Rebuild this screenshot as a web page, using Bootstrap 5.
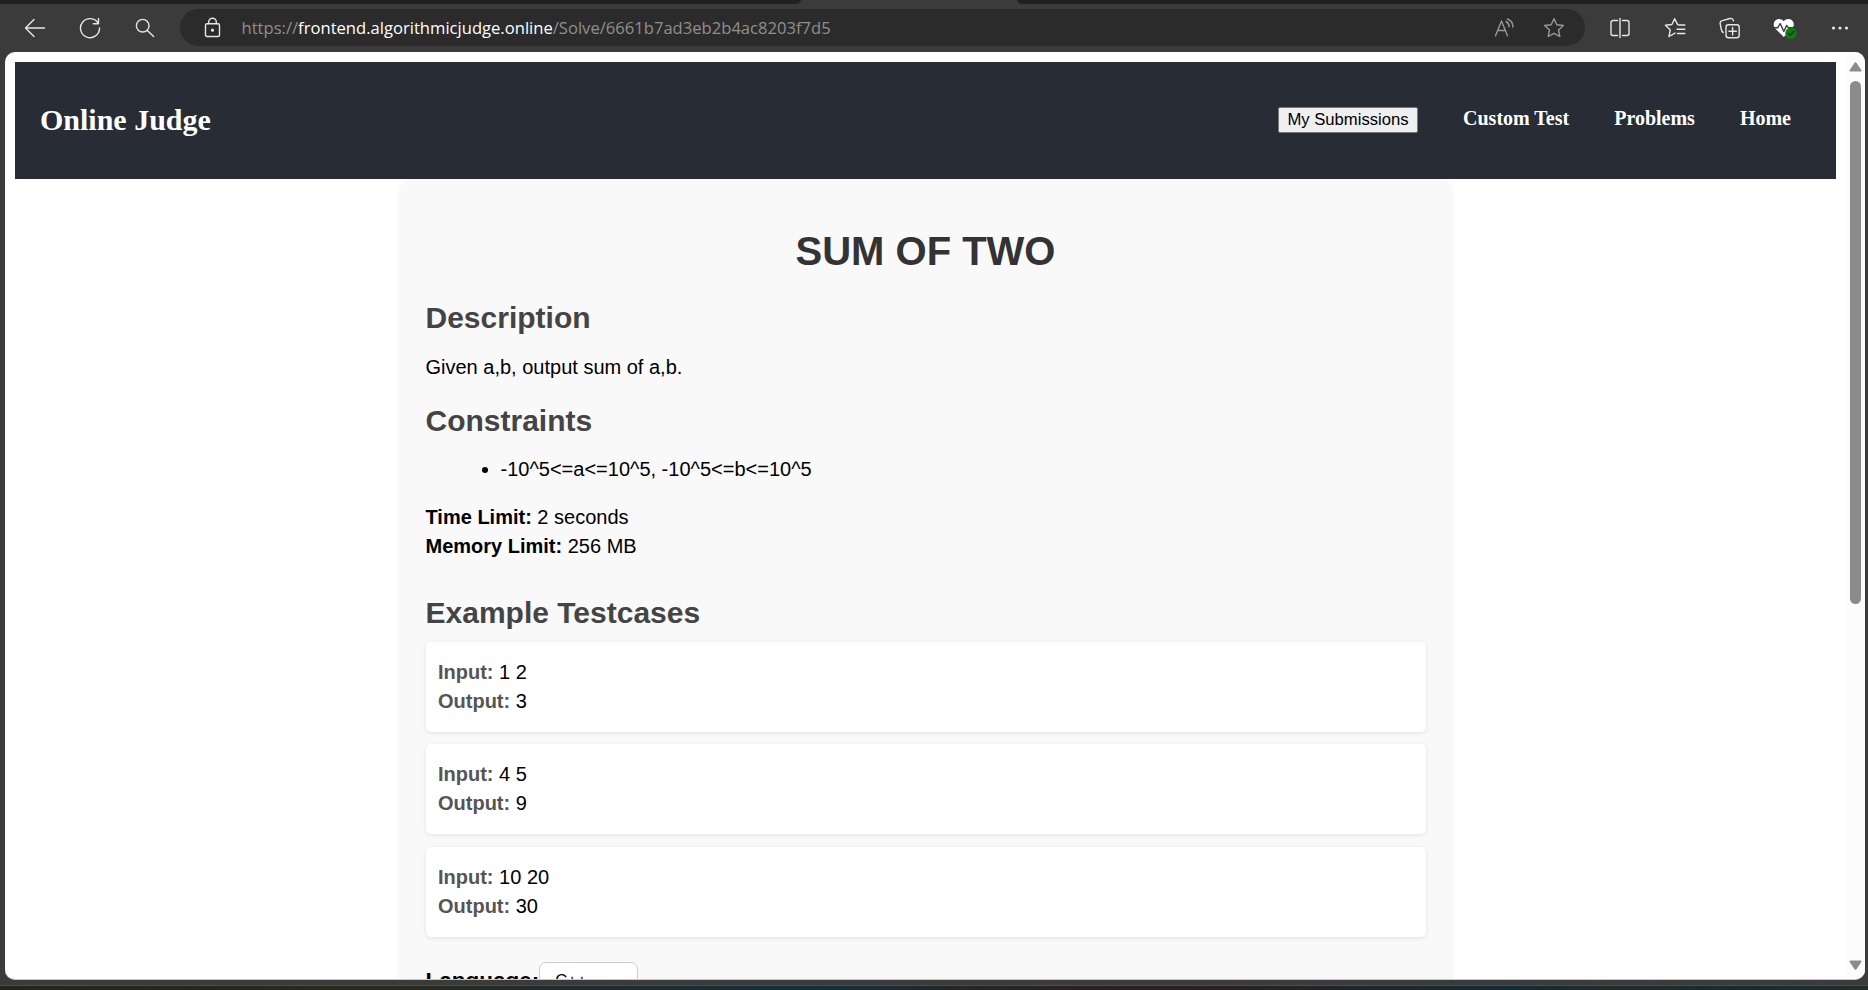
<!DOCTYPE html>
<html lang="en">
<head>
<meta charset="utf-8">
<title>Online Judge</title>
<link href="https://cdn.jsdelivr.net/npm/bootstrap@5.3.0/dist/css/bootstrap.min.css" rel="stylesheet">
<style>
body { height: 990px; overflow: hidden; background: #3b3b3b; color: #000; font-family: "Liberation Sans", Arial, sans-serif; font-size: 20px; line-height: 29.3px; }
.tab-strip { height: 4px; }
.tab-rest { background: #202020; }
.tab-left { width: 801px; border-bottom-right-radius: 6px 4px; }
.tab-right { width: 851px; border-bottom-left-radius: 6px 4px; }
.toolbar { height: 48px; padding: 0 1px 0 7.5px; color: #e6e6e6; }
.slot { width: 55px; height: 37px; }
.toolbar svg { display: block; fill: none; stroke: currentColor; stroke-width: 1.4; stroke-linecap: round; stroke-linejoin: round; }
.address { height: 37px; margin: 0 7px 1px 7.5px; background: #2b2b2b; padding: 0 6px 0 24px; }
.address .slot { width: 49.5px; color: #989898; }
.url { margin-left: 20.5px; font-family: "Open Sans", sans-serif; font-size: 16.6px; color: #8f8f8f; white-space: nowrap; line-height: 24px; }
.viewport { height: 928px; margin: 0 3px 0 5px; border-radius: 10px; border-bottom: 1px solid #c8c8c8; }
.page { padding: 10px 10px 0; }
.site-header { height: 117px; background: #282c35; padding: 0 45px 2px 25px; font-family: "Liberation Serif", "Times New Roman", serif; font-weight: 700; }
.site-header h1 { font-size: 30px; line-height: 36px; font-weight: 700; color: #fff; }
.site-links { gap: 45px; line-height: 24px; margin-bottom: 4px; }
.site-links a { color: #fff; text-decoration: none; }
.btn-sub { font: 16.67px/20px "Liberation Sans", Arial, sans-serif; color: #000; background: #efefef; border: 1px solid #767676; border-radius: 2px; padding: 2px 8px 3px; width: 140px; height: 26px; white-space: nowrap; }
.problem { width: 1050px; background: #f9f9f9; border-radius: 10px; box-shadow: 0 3px 6px rgba(0,0,0,.07); padding: 48px 25px 0; height: 900px; }
.site-header, .problem { position: relative; }
.site-header { z-index: 1; }
.problem h2 { font-size: 40px; line-height: 48px; font-weight: 700; color: #333; margin-bottom: 25px; }
.problem h3 { font-size: 30px; line-height: 36px; font-weight: 700; color: #444; margin: 0; }
.statement { margin: 17.4px 0 19.9px; }
.rules { margin: 16.3px 0 18.9px; padding-left: 75px; }
.problem h3.examples { margin: 33.4px 0 10.7px; }
.testcase { height: 90px; background: #fff; border-radius: 5px; box-shadow: 0 1px 4px rgba(0,0,0,.1); padding: 16px 12.5px 0; margin-bottom: 12.4px; }
.testcase strong { color: #555; }
.lang-row { margin-top: 25.3px; }
.lang-label { font-size: 22.5px; line-height: 26px; margin-top: 6.3px; }
.lang-box { width: 99px; height: 46px; border: 1px solid #ccccd6; border-radius: 7px; background: #fff; font-size: 16.67px; line-height: 20px; padding: 8px 15px; }
.scroll-track { width: 19px; background: #fcfcfc; padding: 10px 0 9px; }
.scroll-thumb { width: 11px; height: 523px; border-radius: 6px; background: #8b8b8b; margin-top: 9px; margin-left: 4px; align-self: flex-start; }
.scroll-track svg { fill: #8b8b8b; display: block; margin-left: 3px; }
.taskbar { height: 5px; margin-top: 5px; border-top: 1px solid #4a4d4d; background: linear-gradient(90deg, #23261f 0, #27291b 18%, #1e2b2d 33%, #142e39 44%, #262626 52%, #2b1f20 62%, #1d282b 75%, #142b33 81%, #222a2a 87%, #152d2d 93%, #252b2b 100%); }
</style>
</head>
<body>
<div class="tab-strip d-flex justify-content-between">
  <div class="tab-rest tab-left"></div>
  <div class="tab-rest tab-right"></div>
</div>

<div class="toolbar d-flex align-items-center">
  <div class="slot d-flex align-items-center justify-content-center"><svg width="22" height="22" viewBox="0 0 22 22"><path d="M20.5 11H1.5M10 2.5 1.5 11l8.500 8.500"/></svg></div>
  <div class="slot d-flex align-items-center justify-content-center"><svg width="22" height="22" viewBox="0 0 22 22"><path d="M19.300 6.500A9.500 9.500 0 1 0 20.500 11M19.500 1.500v5.200h-5.200"/></svg></div>
  <div class="slot d-flex align-items-center justify-content-center"><svg width="20" height="20" viewBox="0 0 20 20"><circle cx="7.700" cy="7.700" r="6.300"/><path d="m12.400 12.400 6.200 6.200"/></svg></div>

  <div class="address flex-grow-1 d-flex align-items-center rounded-pill">
    <svg width="17" height="21" viewBox="0 0 17 21"><rect x="1.500" y="6.800" width="14" height="12.700" rx="1.500"/><path d="M4.700 6.500V5a3.800 3.800 0 0 1 7.600 0v1.500"/><circle cx="8.500" cy="13.200" r=".9" fill="currentColor"/></svg>
    <div class="url flex-grow-1">https://<span class="text-white">frontend.algorithmicjudge.online</span>/Solve/6661b7ad3eb2b4ac8203f7d5</div>
    <div class="slot d-flex align-items-center justify-content-center"><svg width="21" height="20" viewBox="0 0 21 20"><path d="M1.500 17.800 7.500 3l6 14.800M3.600 12.500h7.800M12 3.500c2 1 3.100 3 3.100 5.300M13.500 1C17 2.300 19 5.400 18.800 9"/></svg></div>
    <div class="slot d-flex align-items-center justify-content-center"><svg width="22" height="22" viewBox="0 0 22 22"><path d="m11 1.700 2.800 6 6.600.8-4.900 4.500 1.300 6.500-5.800-3.200-5.800 3.200L6.500 13 1.600 8.500l6.600-.8z"/></svg></div>
  </div>

  <div class="slot d-flex align-items-center justify-content-center"><svg width="20" height="22" viewBox="0 0 20 22"><path d="M7.500 3.500H3A2 2 0 0 0 1 5.500v11a2 2 0 0 0 2 2h4.500M12.500 3.500H17a2 2 0 0 1 2 2v11a2 2 0 0 1-2 2h-4.500M10 1.500v19"/></svg></div>
  <div class="slot d-flex align-items-center justify-content-center"><svg width="22" height="22" viewBox="0 0 22 22"><path d="M13.500 7.400 10.700 1.700 7.900 7.500l-6.500.8 4.900 4.600L5 19.500l6-3.400M14.500 8h6.300M13 12.300h7.800M13.500 16.500h7.300"/></svg></div>
  <div class="slot d-flex align-items-center justify-content-center"><svg width="22" height="22" viewBox="0 0 22 22"><rect x="7" y="7.700" width="13.200" height="13" rx="2.500"/><path d="M13.600 10.500v7.500M9.900 14.200h7.500M4.200 15.500C2.800 14.800 2.500 13.500 2.200 12L1.200 6.800C.9 5.200 1.600 4 3.200 3.600L11 1.500c1.900-.5 3 .4 3.400 2.300"/></svg></div>
  <div class="slot d-flex align-items-center justify-content-center"><svg width="24" height="24" viewBox="0 0 24 24"><path fill="#fff" stroke="none" d="M10.800 21 2.500 12.700C-.5 9.500.4 4.300 4.500 3.200c2.500-.7 4.600.2 6.200 2.100 1.700-1.900 3.900-2.800 6.300-2.100 4.100 1.100 5 6.300 2 9.500z"/><path d="M0 11.700h4.800l2.400-4.200 3.600 8 2.800-6 1.600 2.200h6" stroke="#3b3b3b"/><circle cx="18" cy="17.300" r="5.700" fill="#107c10" stroke="none"/><path d="m15.400 17.500 1.800 1.800 3.500-3.700" stroke="#17371a"/></svg></div>
  <div class="slot d-flex align-items-center justify-content-center"><svg width="18" height="6" viewBox="0 0 18 6"><g fill="currentColor" stroke="none"><circle cx="2.500" cy="3" r="1.600"/><circle cx="9" cy="3" r="1.600"/><circle cx="15.500" cy="3" r="1.600"/></g></svg></div>
</div>

<div class="viewport bg-white d-flex overflow-hidden">
  <main class="page flex-grow-1">
    <header class="site-header d-flex align-items-center justify-content-between">
      <h1 class="m-0">Online Judge</h1>
      <nav class="site-links d-flex align-items-center">
        <button class="btn-sub mt-1" type="button">My Submissions</button>
        <a href="#">Custom Test</a>
        <a href="#">Problems</a>
        <a href="#">Home</a>
      </nav>
    </header>
    <section class="problem mx-auto">
      <h2 class="text-center">SUM OF TWO</h2>
      <h3>Description</h3>
      <p class="statement">Given a,b, output sum of a,b.</p>
      <h3>Constraints</h3>
      <ul class="rules"><li>-10^5&lt;=a&lt;=10^5, -10^5&lt;=b&lt;=10^5</li></ul>
      <div><strong>Time Limit:</strong> 2 seconds</div>
      <div><strong>Memory Limit:</strong> 256 MB</div>
      <h3 class="examples">Example Testcases</h3>
      <div class="testcase"><div><strong>Input:</strong> 1 2</div><div><strong>Output:</strong> 3</div></div>
      <div class="testcase"><div><strong>Input:</strong> 4 5</div><div><strong>Output:</strong> 9</div></div>
      <div class="testcase"><div><strong>Input:</strong> 10 20</div><div><strong>Output:</strong> 30</div></div>
      <div class="lang-row d-flex align-items-start"><strong class="lang-label">Language:</strong><div class="lang-box">C++</div></div>
    </section>
  </main>
  <div class="scroll-track d-flex flex-column">
    <svg width="13" height="10" viewBox="0 0 13 10"><path d="M5.400 1q1.100-1.500 2.200 0l4.700 7q.6 1.600-1 1.600H1.700Q.1 9.600.7 8z"/></svg>
    <div class="scroll-thumb"></div>
    <svg class="mt-auto" width="13" height="10" viewBox="0 0 13 10"><path d="M5.400 9q1.100 1.500 2.200 0l4.700-7q.6-1.600-1-1.600H1.700Q.1.400.7 2z"/></svg>
  </div>
</div>
<div class="taskbar"></div>
<script src="https://cdn.jsdelivr.net/npm/bootstrap@5.3.0/dist/js/bootstrap.bundle.min.js"></script>
</body>
</html>
